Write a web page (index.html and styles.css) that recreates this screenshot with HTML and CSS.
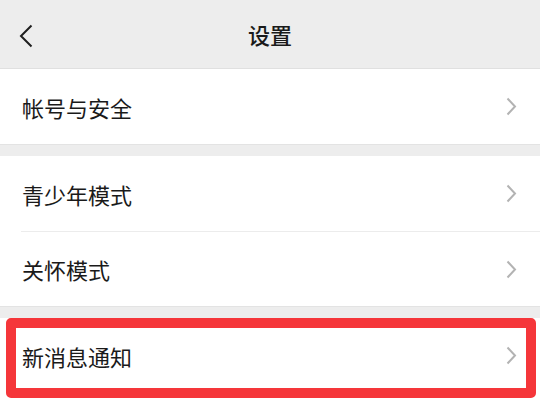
FILE: index.html
```html
<!DOCTYPE html>
<html lang="zh-CN">
<head>
    <meta charset="UTF-8">
    <meta name="viewport" content="width=device-width, initial-scale=1.0">
    <title>设置</title>
    <link rel="stylesheet" href="styles.css">
</head>
<body>
    <div class="page">
        <div class="header">
            <span class="back">
                <svg width="14" height="24" viewBox="0 0 14 24"><path d="M12.5 1.5 L2 12 L12.5 22.5" fill="none" stroke="#1f1f1f" stroke-width="2"/></svg>
            </span>
            <h1>设置</h1>
        </div>

        <div class="group">
            <div class="item">
                <span>帐号与安全</span>
                <svg class="arrow" width="11" height="19" viewBox="0 0 11 19"><path d="M1.5 1.5 L9 9.5 L1.5 17.5" fill="none" stroke="#b3b3b3" stroke-width="2"/></svg>
            </div>
        </div>

        <div class="group">
            <div class="item">
                <span>青少年模式</span>
                <svg class="arrow" width="11" height="19" viewBox="0 0 11 19"><path d="M1.5 1.5 L9 9.5 L1.5 17.5" fill="none" stroke="#b3b3b3" stroke-width="2"/></svg>
            </div>
            <div class="item">
                <span>关怀模式</span>
                <svg class="arrow" width="11" height="19" viewBox="0 0 11 19"><path d="M1.5 1.5 L9 9.5 L1.5 17.5" fill="none" stroke="#b3b3b3" stroke-width="2"/></svg>
            </div>
        </div>

        <div class="group marked">
            <div class="item">
                <span>新消息通知</span>
                <svg class="arrow" width="11" height="19" viewBox="0 0 11 19"><path d="M1.5 1.5 L9 9.5 L1.5 17.5" fill="none" stroke="#b3b3b3" stroke-width="2"/></svg>
            </div>
            <div class="highlight"></div>
        </div>
    </div>
</body>
</html>
```

FILE: styles.css
```css
body {
    margin: 0;
    padding: 0;
    background-color: #ededed;
    font-family: "Noto Sans CJK SC", "Noto Sans", sans-serif;
    color: #1a1a1a;
}
.page {
    width: 540px;
    height: 407px;
    overflow: hidden;
}
.header {
    height: 68px;
    display: flex;
    align-items: center;
    justify-content: center;
    position: relative;
    border-bottom: 1px solid #e0e0e0;
}
.header h1 {
    margin: 0;
    font-size: 22px;
    font-weight: 500;
    color: #1a1a1a;
}
.back {
    position: absolute;
    left: 19px;
    top: 24px;
    display: flex;
}
.group {
    background: white;
    margin-bottom: 11px;
    border-bottom: 1px solid #e3e3e3;
}
.item {
    height: 75px;
    padding: 0 23px 0 22px;
    display: flex;
    align-items: center;
    justify-content: space-between;
    font-size: 22px;
}
.item + .item {
    border-top: 1px solid #ececec;
    margin-left: 21px;
    padding-left: 1px;
    height: 74px;
}
.marked {
    position: relative;
    border-bottom: none;
    height: 100px;
}
.marked .item {
    height: 75px;
}
.highlight {
    position: absolute;
    left: 6px;
    top: 0;
    width: 510px;
    height: 60px;
    border: 10px solid #f5363a;
    border-radius: 5px;
}
```
